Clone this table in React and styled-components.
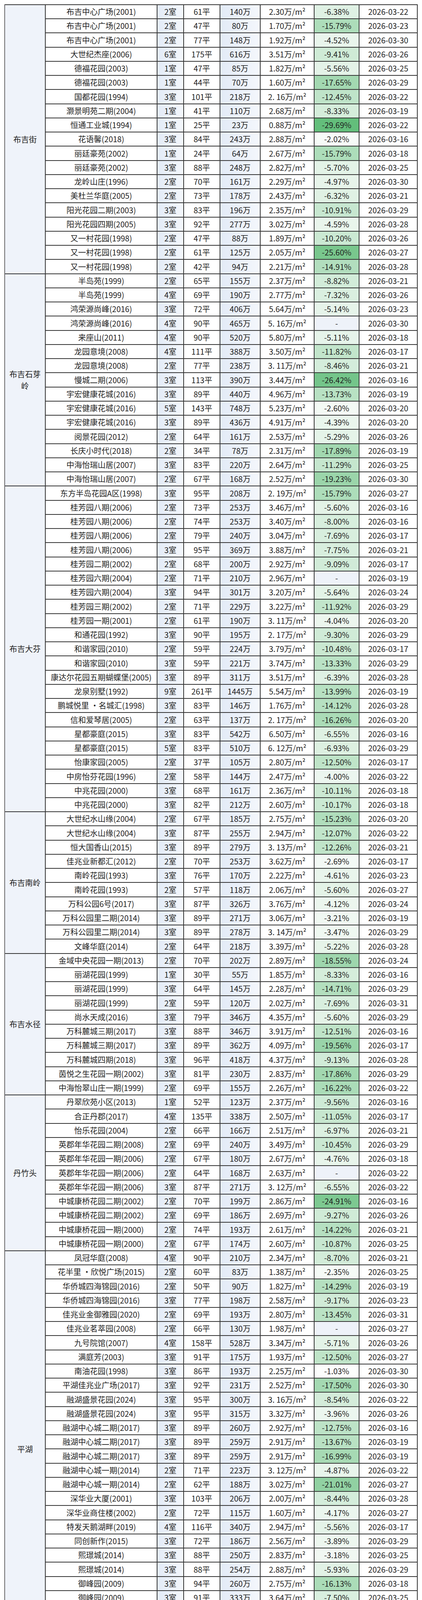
import React from "react";
import styled, { createGlobalStyle } from "styled-components";

const GlobalStyle = createGlobalStyle`
  html, body { margin: 0; padding: 0; background: #ffffff; }
  body { font-family: "Noto Sans CJK SC", "Noto Sans", "Liberation Sans", sans-serif; color: #1f1f1f; }
`;

const DATA = [
  ["布吉街", `布吉中心广场(2001)|2|61|140|2.30|-6.38|2026-03-22
布吉中心广场(2001)|2|47|80|1.70|-15.79|2026-03-23
布吉中心广场(2001)|2|77|148|1.92|-4.52|2026-03-30
大世纪杰座(2006)|6|175|616|3.51|-9.41|2026-03-26
德福花园(2003)|1|47|85|1.82|-5.56|2026-03-25
德福花园(2003)|1|44|70|1.60|-17.65|2026-03-29
国都花园(1994)|3|101|218|2. 16|-12.45|2026-03-22
灏景明苑二期(2004)|1|41|110|2.68|-8.33|2026-03-19
恒通工业城(1994)|1|25|23|0.88|-29.69|2026-03-22
花语馨(2018)|3|84|243|2.88|-2.02|2026-03-16
丽廷豪苑(2002)|1|24|64|2.67|-15.79|2026-03-18
丽廷豪苑(2002)|3|88|248|2.82|-5.70|2026-03-25
龙岭山庄(1996)|2|70|161|2.29|-4.97|2026-03-30
美杜兰华庭(2005)|2|73|178|2.43|-6.32|2026-03-21
阳光花园二期(2003)|3|83|196|2.35|-10.91|2026-03-29
阳光花园四期(2005)|3|92|277|3.02|-4.59|2026-03-28
又一村花园(1998)|2|47|88|1.89|-10.20|2026-03-26
又一村花园(1998)|2|61|125|2.05|-25.60|2026-03-27
又一村花园(1998)|2|42|94|2.21|-14.91|2026-03-28`],
  ["布吉石芽岭", `半岛苑(1999)|2|65|155|2.37|-8.82|2026-03-21
半岛苑(1999)|4|69|190|2.77|-7.32|2026-03-26
鸿荣源尚峰(2016)|3|72|406|5.64|-5.14|2026-03-23
鸿荣源尚峰(2016)|4|90|465|5. 16||2026-03-30
来座山(2011)|4|90|520|5.80|-5.11|2026-03-18
龙园意境(2008)|4|111|388|3.50|-11.82|2026-03-17
龙园意境(2008)|2|77|238|3. 11|-8.46|2026-03-21
慢城二期(2006)|3|113|390|3.44|-26.42|2026-03-16
宇宏健康花城(2016)|3|89|440|4.96|-13.73|2026-03-19
宇宏健康花城(2016)|5|143|748|5.23|-2.60|2026-03-20
宇宏健康花城(2016)|3|89|436|4.91|-4.39|2026-03-20
阅景花园(2012)|2|64|161|2.53|-5.29|2026-03-26
长庆小时代(2018)|2|34|78|2.31|-17.89|2026-03-19
中海怡瑞山居(2007)|3|83|220|2.64|-11.29|2026-03-25
中海怡瑞山居(2007)|2|67|168|2.52|-19.23|2026-03-30`],
  ["布吉大芬", `东方半岛花园A区(1998)|3|95|208|2. 19|-15.79|2026-03-27
桂芳园八期(2006)|2|73|253|3.46|-5.60|2026-03-16
桂芳园八期(2006)|2|74|253|3.40|-8.00|2026-03-16
桂芳园八期(2006)|2|79|240|3.04|-7.69|2026-03-17
桂芳园八期(2006)|3|95|369|3.88|-7.75|2026-03-21
桂芳园二期(2002)|2|68|200|2.92|-9.09|2026-03-17
桂芳园六期(2004)|2|71|210|2.96||2026-03-19
桂芳园六期(2004)|3|94|301|3.20|-5.64|2026-03-24
桂芳园三期(2002)|2|71|229|3.22|-11.92|2026-03-29
桂芳园一期(2001)|2|61|190|3. 11|-4.04|2026-03-20
和通花园(1992)|3|90|195|2. 17|-9.30|2026-03-29
和谐家园(2010)|2|59|224|3.79|-10.48|2026-03-17
和谐家园(2010)|3|59|221|3.74|-13.33|2026-03-29
康达尔花园五期蝴蝶堡(2005)|3|89|311|3.51|-6.39|2026-03-28
龙泉别墅(1992)|9|261|1445|5.54|-13.99|2026-03-19
鹏城悦里 ·名城汇(1998)|3|83|146|1.76|-14.12|2026-03-28
信和爱琴居(2005)|2|63|137|2. 17|-16.26|2026-03-20
星都豪庭(2015)|3|83|542|6.50|-6.55|2026-03-16
星都豪庭(2015)|5|83|510|6. 12|-6.93|2026-03-29
怡康家园(2005)|2|37|105|2.80|-12.50|2026-03-17
中房怡芬花园(1996)|2|58|144|2.47|-4.00|2026-03-22
中兆花园(2000)|3|68|161|2.36|-10.11|2026-03-18
中兆花园(2000)|3|82|212|2.60|-10.17|2026-03-18`],
  ["布吉南岭", `大世纪水山缘(2004)|2|67|185|2.75|-15.23|2026-03-20
大世纪水山缘(2004)|3|87|255|2.94|-12.07|2026-03-22
恒大国香山(2015)|3|89|279|3. 13|-12.26|2026-03-21
佳兆业新都汇(2012)|2|70|253|3.62|-2.69|2026-03-17
南岭花园(1993)|3|76|170|2.22|-4.61|2026-03-23
南岭花园(1993)|2|57|118|2.06|-5.60|2026-03-27
万科公园6号(2017)|3|87|326|3.76|-4.12|2026-03-24
万科公园里二期(2014)|3|89|271|3.06|-3.21|2026-03-19
万科公园里二期(2014)|3|89|278|3. 14|-3.47|2026-03-29
文峰华庭(2014)|2|64|218|3.39|-5.22|2026-03-28`],
  ["布吉水径", `金域中央花园一期(2013)|2|70|202|2.89|-18.55|2026-03-24
丽湖花园(1999)|1|30|55|1.85|-8.33|2026-03-16
丽湖花园(1999)|3|64|145|2.28|-14.71|2026-03-29
丽湖花园(1999)|2|59|120|2.02|-7.69|2026-03-31
尚水天成(2016)|3|79|346|4.35|-5.60|2026-03-29
万科麓城三期(2017)|3|88|346|3.91|-12.51|2026-03-16
万科麓城三期(2017)|3|89|362|4.09|-19.56|2026-03-17
万科麓城四期(2018)|3|96|418|4.37|-9.13|2026-03-28
茵悦之生花园一期(2002)|3|81|230|2.83|-17.86|2026-03-29
中海怡翠山庄一期(1999)|2|69|155|2.26|-16.22|2026-03-22`],
  ["丹竹头", `丹翠欣苑小区(2013)|1|52|123|2.37|-9.56|2026-03-16
合正丹郡(2017)|4|135|338|2.50|-11.05|2026-03-17
怡乐花园(2004)|2|66|166|2.51|-6.97|2026-03-21
英郡年华花园二期(2008)|2|69|240|3.49|-10.45|2026-03-29
英郡年华花园一期(2006)|2|67|180|2.67|-4.76|2026-03-18
英郡年华花园一期(2006)|2|64|168|2.63||2026-03-22
英郡年华花园一期(2006)|3|87|271|3. 12|-6.55|2026-03-22
中城康桥花园二期(2002)|2|70|199|2.86|-24.91|2026-03-16
中城康桥花园二期(2002)|2|69|186|2.69|-9.27|2026-03-26
中城康桥花园一期(2000)|2|74|193|2.61|-14.22|2026-03-21
中城康桥花园一期(2000)|2|67|174|2.60|-10.87|2026-03-25`],
  ["平湖", `凤冠华庭(2008)|4|90|210|2.34|-8.70|2026-03-21
花半里 ·欣悦广场(2015)|2|60|83|1.38|-2.35|2026-03-25
华侨城四海锦园(2016)|2|50|90|1.82|-14.29|2026-03-19
华侨城四海锦园(2016)|3|77|198|2.58|-9.17|2026-03-23
佳兆业金御雅园(2020)|2|69|193|2.80|-13.45|2026-03-31
佳兆业茗萃园(2008)|2|66|130|1.98||2026-03-27
九号院馆(2007)|4|158|528|3.34|-5.71|2026-03-26
满庭芳(2003)|3|91|175|1.93|-12.50|2026-03-27
南油花园(1998)|3|86|193|2.25|-1.03|2026-03-30
平湖佳兆业广场(2017)|3|92|231|2.52|-17.50|2026-03-30
融湖盛景花园(2024)|3|95|300|3. 16|-8.54|2026-03-22
融湖盛景花园(2024)|3|95|315|3.32|-3.96|2026-03-26
融湖中心城二期(2017)|3|89|260|2.92|-12.75|2026-03-16
融湖中心城二期(2017)|3|89|259|2.91|-13.67|2026-03-19
融湖中心城二期(2017)|3|89|259|2.91|-16.99|2026-03-19
融湖中心城一期(2014)|2|71|223|3. 12|-4.87|2026-03-22
融湖中心城一期(2014)|2|62|188|3.02|-21.01|2026-03-27
深华业大厦(2001)|3|103|206|2.00|-8.44|2026-03-28
深华业商住楼(2002)|2|72|115|1.60|-4.17|2026-03-27
特发天鹅湖畔(2019)|4|116|340|2.94|-5.56|2026-03-17
同创新作(2015)|3|72|186|2.56|-3.89|2026-03-29
熙璟城(2014)|3|88|250|2.83|-3.18|2026-03-25
熙璟城(2014)|3|88|254|2.88|-5.93|2026-03-29
御峰园(2009)|3|94|260|2.75|-16.13|2026-03-18
御峰园(2009)|3|91|333|3.64|-7.50|2026-03-25
卓越星源(2019)|3|91|241|2.65|-3.21|2026-03-16
卓越星源(2019)|3|87|229|2.62|-7.78|2026-03-22
卓越星源(2019)|3|66|175|2.66|-6.81|2026-03-20`],
].map(([district, block]) => ({
  district,
  rows: block.split("\n").map((line) => {
    const [name, rooms, area, price, unit, change, date] = line.split("|");
    return { name, rooms, area, price, unit, change: change === "" ? null : parseFloat(change), date };
  }),
}));

const MIN = -29.69;
const MAX = -1.03;
const LOW = [99, 190, 123];
const HIGH = [252, 253, 252];

function changeFill(v) {
  if (v === null) return "#eef2f9";
  let t = (v - MIN) / (MAX - MIN);
  t = Math.max(0, Math.min(1, t));
  const c = LOW.map((l, i) => Math.round(l + (HIGH[i] - l) * t));
  return `rgb(${c[0]}, ${c[1]}, ${c[2]})`;
}

const Frame = styled.div`
  box-sizing: border-box;
  width: 1080px;
  height: 4194px;
  padding: 11px 0 0 11px;
  overflow: hidden;
  background: #ffffff;
`;

/* rows repeat 36/36/36/37px pitch (avg 36.25px) incl. 2px rule */
const Sheet = styled.div`
  display: grid;
  grid-template-columns: 102px 284px 66px 91px 101px 136px 113px 147px;
  grid-auto-rows: 34px 34px 35px 34px;
  gap: 2px;
  padding: 2px 2px 2px 0;
  border-left: 2px solid #6a6a6a;
  width: fit-content;
  background: #353535;
  font-size: 20px;
  line-height: 1.5;
  color: #1f1f1f;
`;

const Cell = styled.div`
  display: flex;
  align-items: center;
  justify-content: center;
  white-space: nowrap;
  overflow: hidden;
  background: ${(p) =>
    p.$tone === "blue"
      ? "linear-gradient(90deg, #e3ebf7 0%, #f4f7fc 100%)"
      : "#ffffff"};
`;

const DistrictCell = styled.div`
  grid-column: 1;
  grid-row: span ${(p) => p.$span};
  display: flex;
  align-items: center;
  justify-content: center;
  padding: 0 9px;
  text-align: center;
  white-space: normal;
  word-break: break-all;
  background: #eff3fa;
  line-height: 30px;
`;

const ChangeCell = styled(Cell)`
  background: ${(p) => p.$fill};
`;

export default function App() {
  return (
    <>
      <GlobalStyle />
      <Frame>
        <Sheet role="table">
          {DATA.map((group) => (
            <React.Fragment key={group.district}>
              <DistrictCell $span={group.rows.length}>{group.district}</DistrictCell>
              {group.rows.map((r, i) => (
                <React.Fragment key={i}>
                  <Cell>{r.name}</Cell>
                  <Cell $tone="blue">{r.rooms}室</Cell>
                  <Cell>{r.area}平</Cell>
                  <Cell $tone="blue">{r.price}万</Cell>
                  <Cell>{r.unit}万/m²</Cell>
                  <ChangeCell $fill={changeFill(r.change)}>
                    {r.change === null ? "-" : `${r.change.toFixed(2)}%`}
                  </ChangeCell>
                  <Cell>{r.date}</Cell>
                </React.Fragment>
              ))}
            </React.Fragment>
          ))}
        </Sheet>
      </Frame>
    </>
  );
}
